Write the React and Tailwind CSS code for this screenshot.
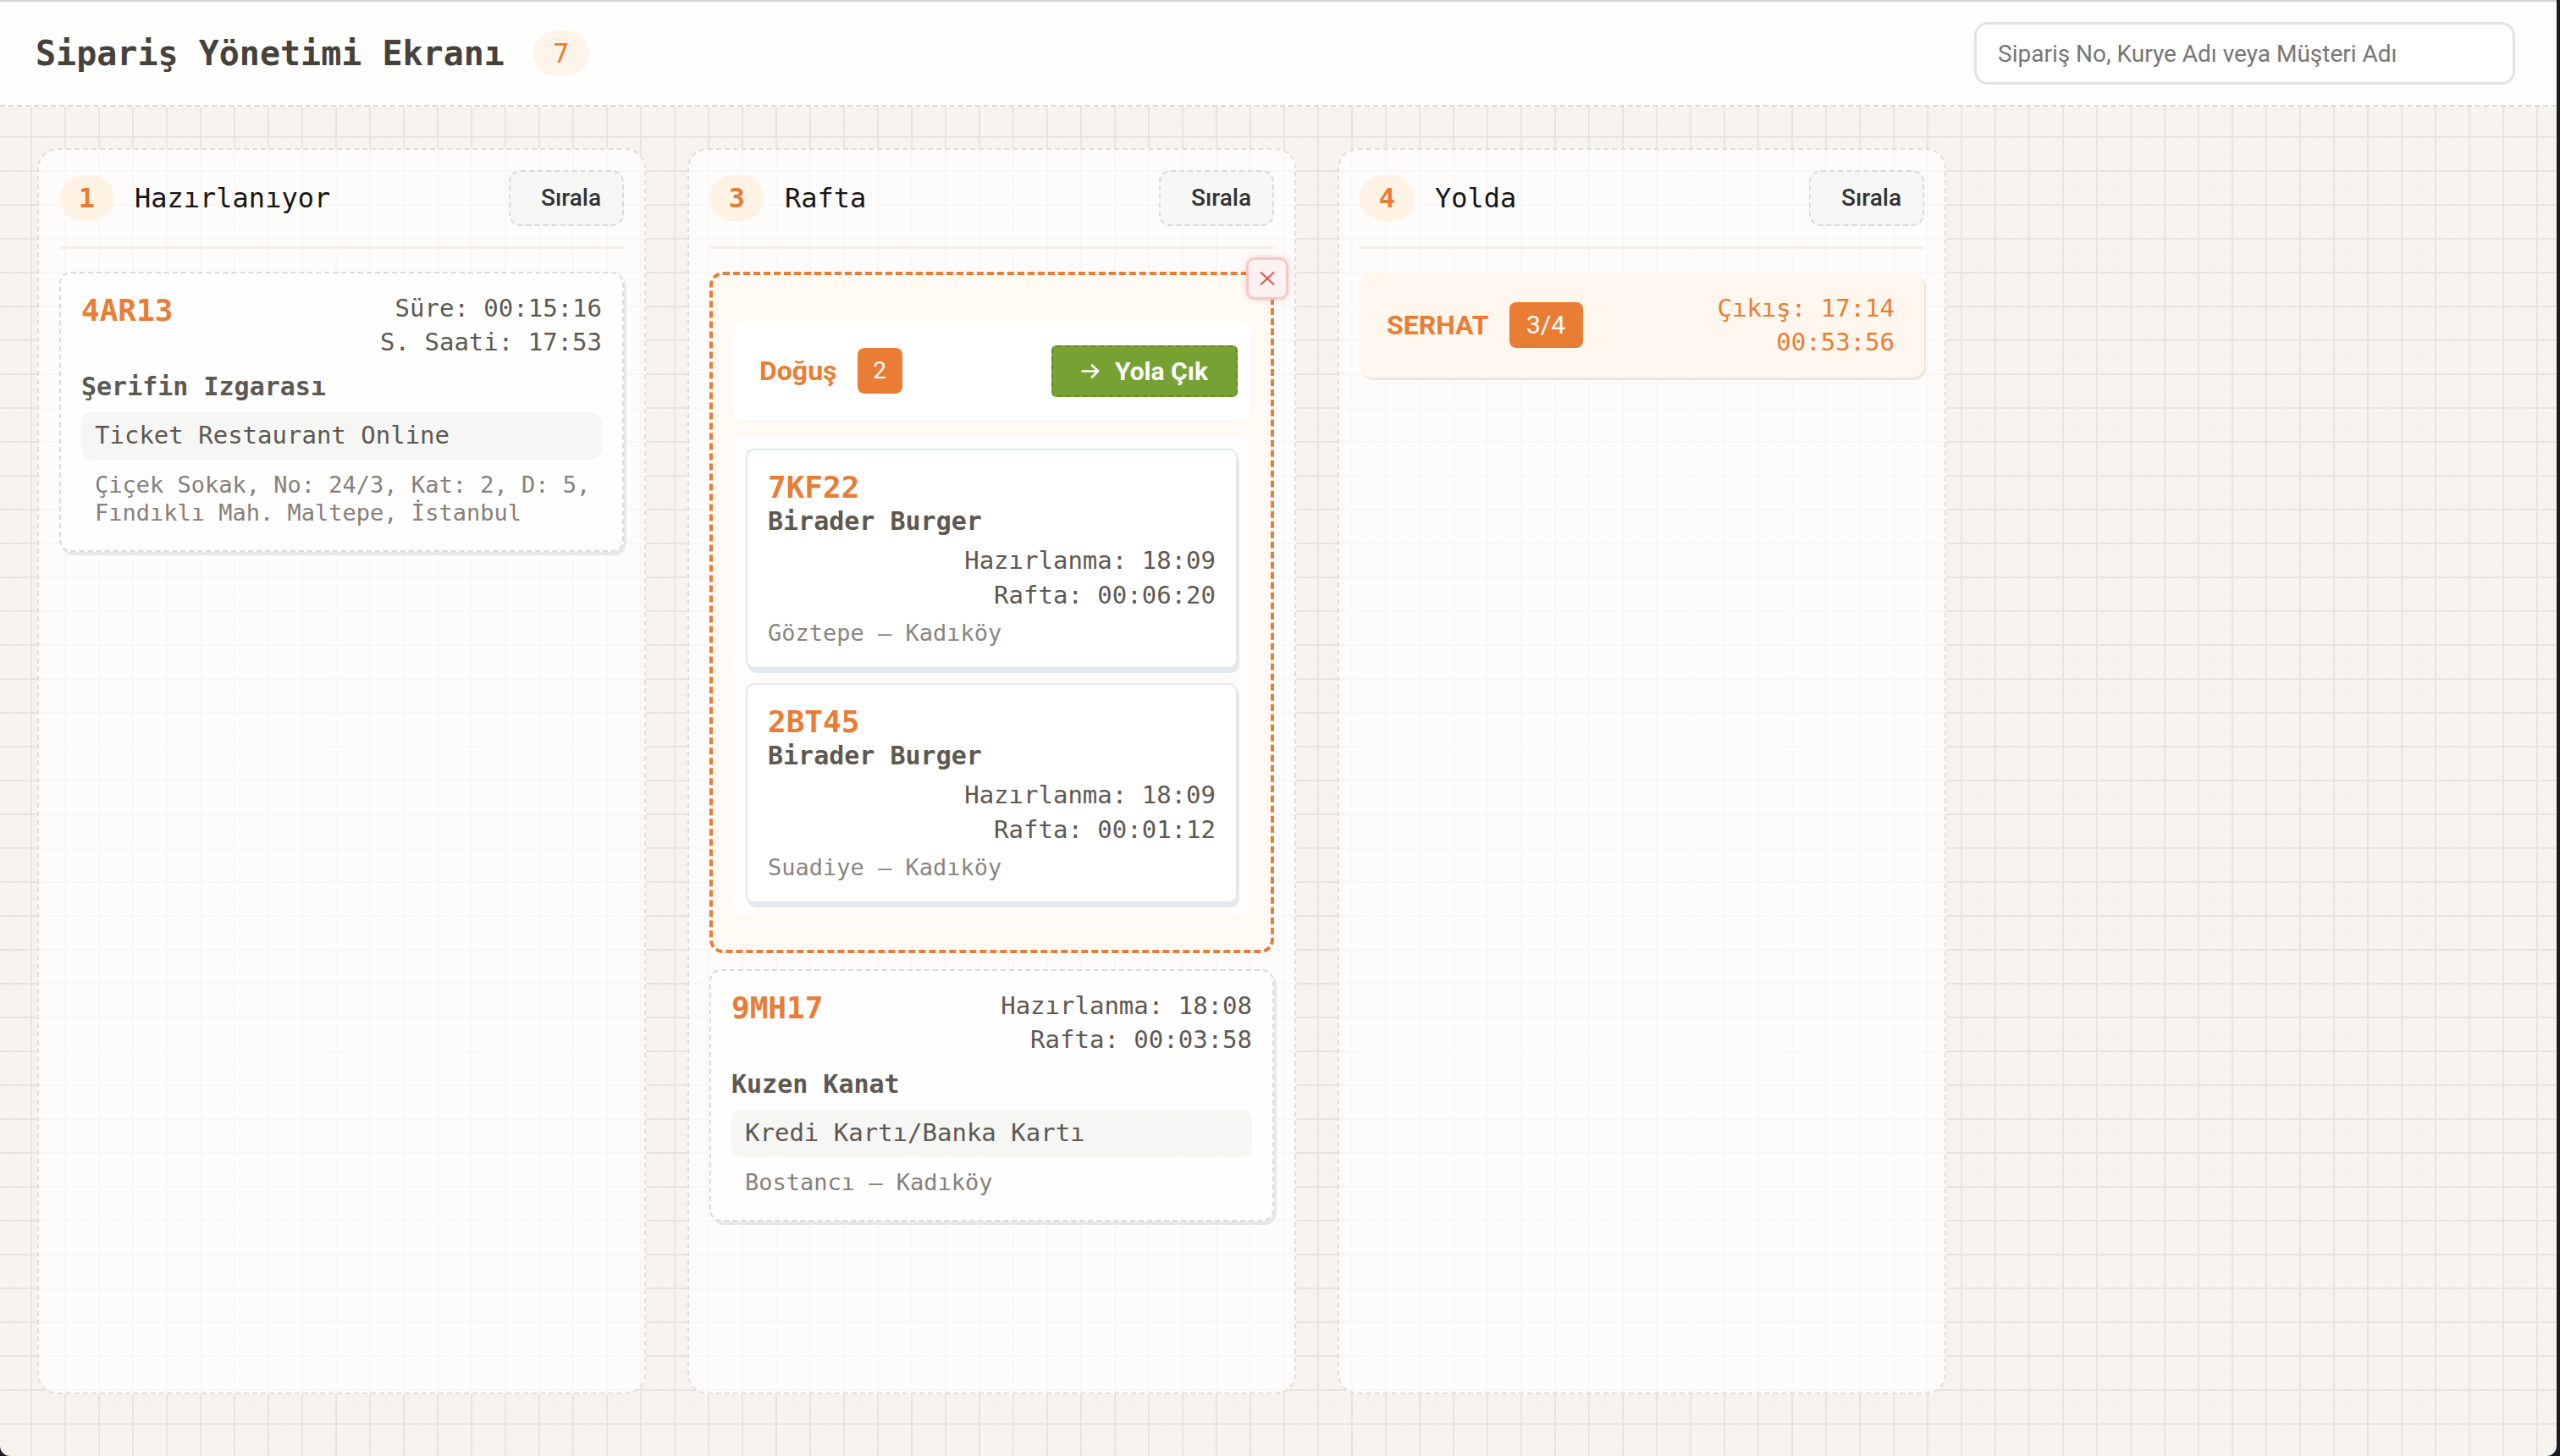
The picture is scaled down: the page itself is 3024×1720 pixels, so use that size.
import React from "react";

const Column = ({ count, title, children }) => {
  return (
    <div className="w-[719px] h-[1472px] shrink-0 rounded-[24px] border-2 border-dashed border-[#e2dfdb] bg-white/70 p-[24px] flex flex-col">
      <div className="flex items-center justify-between pb-[24px] border-b-[3px] border-[#f4efe9]">
        <div className="flex items-center gap-[24px]">
          <span className="w-[65px] h-[54px] rounded-full bg-[#fff3e6] flex items-center justify-center text-[32px] font-bold text-[#e97d36]">
            {count}
          </span>
          <span className="text-[32px] text-[#161616]">{title}</span>
        </div>
        <button className="h-[66px] w-[136px] rounded-[14px] border-2 border-dashed border-[#dcdbd9] bg-[#f7f7f6] flex items-center justify-end pr-[25px] font-['Roboto',sans-serif] font-medium text-[28px] text-[#333]">
          Sırala
        </button>
      </div>
      <div className="flex flex-col gap-[19px] pt-[27px]">{children}</div>
    </div>
  );
};

const OrderCard = ({ id, lines, name, payment, address }) => {
  return (
    <div className="rounded-[14px] border-2 border-dashed border-[#dddbd8] bg-white/75 shadow-[3px_4px_0_#e7e8ea] px-[24px] pt-[24px] pb-[28px]">
      <div className="flex items-start justify-between">
        <span className="text-[36px] leading-[40px] font-bold text-[#e97d36]">{id}</span>
        <div className="flex flex-col items-end gap-[6px] text-[29px] leading-[34px] text-[#5e5852]">
          {lines.map((l) => (
            <span key={l}>{l}</span>
          ))}
        </div>
      </div>
      <div className="mt-[16px] text-[30px] leading-[40px] font-bold text-[#5e5852]">{name}</div>
      <div className="mt-[10px] h-[56px] rounded-[12px] bg-[#f6f6f5] flex items-center px-[16px] text-[29px] text-[#5e5852]">
        {payment}
      </div>
      <div className="mt-[13px] pl-[16px] text-[27px] leading-[33px] text-[#85807a] whitespace-nowrap">
        {address.map((a) => (
          <div key={a}>{a}</div>
        ))}
      </div>
    </div>
  );
};

const ShelfCard = ({ id, name, prep, shelf, address }) => {
  return (
    <div className="rounded-[10px] border-2 border-[#e3e7ed] bg-white shadow-[2px_5px_0_#e5e8ec] p-[24px]">
      <div className="text-[36px] leading-[40px] font-bold text-[#e97d36]">{id}</div>
      <div className="text-[30px] leading-[40px] font-bold text-[#5e5852]">{name}</div>
      <div className="mt-[9px] flex flex-col items-end gap-[7px] text-[29px] leading-[34px] text-[#5e5852]">
        <span>Hazırlanma: {prep}</span>
        <span>Rafta: {shelf}</span>
      </div>
      <div className="mt-[11px] text-[27px] leading-[33px] text-[#8a8580]">{address}</div>
    </div>
  );
};

const App = () => {
  return (
    <div className="w-[3024px] h-[1720px] bg-[#1b1c21] flex font-['DejaVu_Sans_Mono',monospace]">
      <div className="w-[3020px] h-full rounded-b-[12px] overflow-hidden flex flex-col bg-[#f7f4f0] [background-image:linear-gradient(to_right,#e7e3de_2px,transparent_2px),linear-gradient(to_bottom,#e7e3de_2px,transparent_2px),linear-gradient(to_right,#f3f0ec_1px,transparent_1px),linear-gradient(to_bottom,#f3f0ec_1px,transparent_1px)] [background-size:40px_40px,40px_40px,20px_20px,20px_20px] [background-position:36px_1px]">
        <header className="h-[126px] shrink-0 border-t-2 border-[#d2d2d2] border-b-2 border-b-[#dcdcdc] bg-[#fefefd] flex items-center justify-between pl-[42px] pr-[49px] [border-bottom-style:dashed]">
          <div className="flex items-center">
            <h1 className="text-[40px] font-bold text-[#46413b]">Sipariş Yönetimi Ekranı</h1>
            <span className="ml-[34px] w-[66px] h-[54px] rounded-full bg-[#fff4e9] flex items-center justify-center text-[32px] text-[#e97d36]">
              7
            </span>
          </div>
          <input
            placeholder="Sipariş No, Kurye Adı veya Müşteri Adı"
            className="w-[639px] h-[74px] rounded-[16px] border-[3px] border-[#e3e3e1] bg-white pl-[25px] font-['Roboto',sans-serif] text-[28px] text-[#333] placeholder:text-[#767676] outline-none"
          />
        </header>

        <main className="flex items-start gap-[49px] pl-[44px] pt-[49px]">
          <Column count="1" title="Hazırlanıyor">
            <OrderCard
              id="4AR13"
              lines={["Süre: 00:15:16", "S. Saati: 17:53"]}
              name="Şerifin Izgarası"
              payment="Ticket Restaurant Online"
              address={["Çiçek Sokak, No: 24/3, Kat: 2, D: 5,", "Fındıklı Mah. Maltepe, İstanbul"]}
            />
          </Column>

          <Column count="3" title="Rafta">
            <div className="relative rounded-[16px] border-4 border-dashed border-[#e97d36] bg-[#fffaf4] px-[23px] pt-[54px] pb-[39px]">
              <button className="absolute -top-[21px] -right-[21px] w-[50px] h-[50px] rounded-[10px] border-[3px] border-[#f5c8c8] bg-[#fdf1f1] shadow-[0_0_8px_rgba(232,90,90,0.25)] flex items-center justify-center">
                <svg width="20" height="18" viewBox="0 0 20 18" fill="none" stroke="#e05555" strokeWidth="2">
                  <path d="M2 1.5L18 16.5M18 1.5L2 16.5" />
                </svg>
              </button>
              <div className="h-[118px] rounded-[16px] bg-white shadow-[0_1px_3px_rgba(0,0,0,0.03)] flex items-center justify-between pl-[32px] pr-[16px]">
                <div className="flex items-center gap-[24px] font-['Roboto',sans-serif]">
                  <span className="text-[32px] font-bold text-[#e97d36]">Doğuş</span>
                  <span className="w-[53px] h-[54px] rounded-[8px] bg-[#e97d36] flex items-center justify-center text-[28px] text-white">
                    2
                  </span>
                </div>
                <button className="w-[220px] h-[61px] rounded-[6px] border-2 border-dashed border-[#5f8a24] bg-[#76a233] flex items-center justify-center gap-[18px] font-['Roboto',sans-serif] font-bold text-[30px] text-white">
                  <svg width="22" height="17" viewBox="0 0 22 17" fill="none" stroke="white" strokeWidth="2.6" strokeLinecap="round" strokeLinejoin="round">
                    <path d="M1.5 8.5H20M13 1.5L20 8.5L13 15.5" />
                  </svg>
                  Yola Çık
                </button>
              </div>
              <div className="mt-[17px] rounded-[16px] bg-[#fffdfb] p-[16px] flex flex-col gap-[17px]">
                <ShelfCard id="7KF22" name="Birader Burger" prep="18:09" shelf="00:06:20" address="Göztepe – Kadıköy" />
                <ShelfCard id="2BT45" name="Birader Burger" prep="18:09" shelf="00:01:12" address="Suadiye – Kadıköy" />
              </div>
            </div>
            <OrderCard
              id="9MH17"
              lines={["Hazırlanma: 18:08", "Rafta: 00:03:58"]}
              name="Kuzen Kanat"
              payment="Kredi Kartı/Banka Kartı"
              address={["Bostancı – Kadıköy"]}
            />
          </Column>

          <Column count="4" title="Yolda">
            <div className="h-[125px] rounded-[14px] bg-[#fff6ed] shadow-[2px_3px_0_#e8e8e8] flex items-center justify-between pl-[32px] pr-[35px]">
              <div className="flex items-center gap-[24px] font-['Roboto',sans-serif]">
                <span className="text-[32px] font-bold text-[#e97d36]">SERHAT</span>
                <span className="w-[87px] h-[54px] rounded-[8px] bg-[#e97d36] flex items-center justify-center text-[30px] text-white">
                  3/4
                </span>
              </div>
              <div className="flex flex-col items-end gap-[6px] text-[29px] leading-[34px] text-[#e97d36]">
                <span>Çıkış: 17:14</span>
                <span>00:53:56</span>
              </div>
            </div>
          </Column>
        </main>
      </div>
    </div>
  );
};

export default App;
